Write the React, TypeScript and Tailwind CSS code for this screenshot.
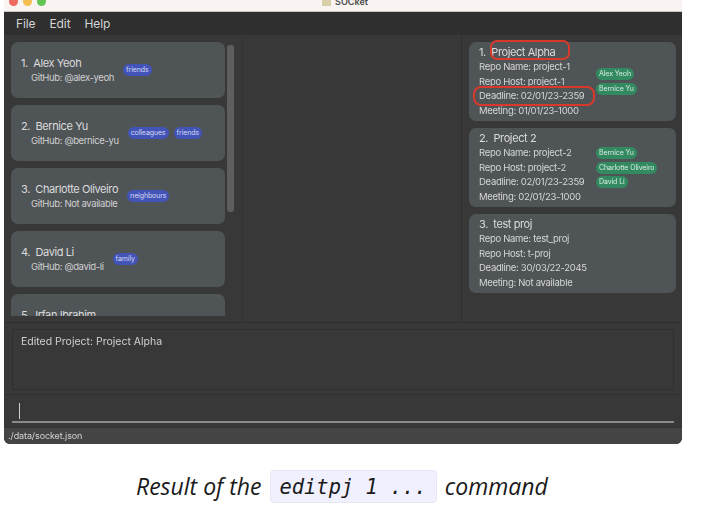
const sans = "font-['Inter','Liberation_Sans',sans-serif]";

const people = [
  { name: "Alex Yeoh", git: "@alex-yeoh", tags: ["friends"] },
  { name: "Bernice Yu", git: "@bernice-yu", tags: ["colleagues", "friends"] },
  { name: "Charlotte Oliveiro", git: "Not available", tags: ["neighbours"] },
  { name: "David Li", git: "@david-li", tags: ["family"] },
];

const projects = [
  { name: "Project Alpha", repo: "project-1", host: "project-1", deadline: "02/01/23-2359", meeting: "01/01/23-1000", members: ["Alex Yeoh", "Bernice Yu"] },
  { name: "Project 2", repo: "project-2", host: "project-2", deadline: "02/01/23-2359", meeting: "02/01/23-1000", members: ["Bernice Yu", "Charlotte Oliveiro", "David Li"] },
  { name: "test proj", repo: "test_proj", host: "t-proj", deadline: "30/03/22-2045", meeting: "Not available", members: [] },
];

function PersonCard({ index, name, git, tags }: { index: number; name: string; git: string; tags: string[] }) {
  return (
    <div className="flex h-[56px] shrink-0 items-center gap-[9px] rounded-[7px] bg-[#4f5457] pl-[10px]">
      <div className="shrink-0 whitespace-nowrap">
        <div className="text-[11px] leading-[15px] tracking-[-0.4px] text-[#dcdcdc]">
          {index}.&nbsp; {name}
        </div>
        <div className="pl-[10px] text-[9.5px] leading-[14px] tracking-[-0.38px] text-[#cfcfcf]">GitHub: {git}</div>
      </div>
      <div className="flex gap-[5px]">
        {tags.map((t) => (
          <span key={t} className="whitespace-nowrap rounded-[6px] bg-[#4254b8] px-[3px] py-[1px] text-[7px] leading-[10px] tracking-[-0.1px] text-[#d5d9f2]">
            {t}
          </span>
        ))}
      </div>
    </div>
  );
}

function PartialCard() {
  return (
    <div className="flex h-[56px] shrink-0 gap-[44px] rounded-[7px] bg-[#4f5457] pl-[10px] pt-[14px]">
      <div className="whitespace-nowrap text-[11px] leading-[15px] tracking-[-0.4px] text-[#dcdcdc]">5.&nbsp; Irfan Ibrahim</div>
      <span className="mt-[8px] h-[14px] w-[38px] rounded-[6px] bg-[#4254b8]" />
    </div>
  );
}

function ProjectCard({ index, p }: { index: number; p: (typeof projects)[number] }) {
  return (
    <div className="flex h-[79px] shrink-0 rounded-[7px] bg-[#4f5457] pl-[10px] pt-[3px]">
      <div className="w-[117px] shrink-0 whitespace-nowrap text-[9.5px] leading-[14.6px] tracking-[-0.3px] text-[#d6d6d6]">
        <div className="text-[11px] leading-[15px] tracking-[-0.4px] text-[#dcdcdc]">
          {index}.&nbsp; {p.name}
        </div>
        <div>Repo Name: {p.repo}</div>
        <div>Repo Host: {p.host}</div>
        <div>Deadline: {p.deadline}</div>
        <div>Meeting: {p.meeting}</div>
      </div>
      <div className="flex flex-col items-start justify-center gap-[2.6px] pb-[3px]">
        {p.members.map((m) => (
          <span key={m} className="whitespace-nowrap rounded-[6px] bg-[#338a61] px-[3px] py-[1px] text-[7px] leading-[10px] tracking-[-0.1px] text-[#d8eee3]">
            {m}
          </span>
        ))}
      </div>
    </div>
  );
}

export default function App() {
  return (
    <div className="h-[510px] w-[728px] overflow-hidden bg-white">
      <div className={`ml-[4px] flex h-[444px] w-[678px] flex-col overflow-hidden rounded-b-[6px] bg-[#383838] blur-[0.35px] ${sans}`}>
        <div className="relative flex h-[12px] shrink-0 items-center justify-center border-b border-[#c9c5c2] bg-[#f9f4f1]">
          <div className="absolute left-[5px] top-[-3px] flex gap-[5px]">
            <span className="h-[9px] w-[9px] rounded-full bg-[#ec6a5e]" />
            <span className="h-[9px] w-[9px] rounded-full bg-[#f4bf4f]" />
            <span className="h-[9px] w-[9px] rounded-full bg-[#61c554]" />
          </div>
          <div className="mt-[-7px] flex items-center gap-[4px] pl-[4px] text-[9px] font-semibold leading-[10px] text-[#4a4a4a]">
            <span className="h-[8px] w-[9px] bg-[#d9cfa8]" />
            SOCket
          </div>
        </div>

        <div className="flex h-[23px] shrink-0 items-center gap-[14px] border-b border-[#303030] bg-[#2f2f2f] pl-[12px] pt-[1px] text-[12px] tracking-[-0.1px] text-[#d4d4d4]">
          <span>File</span>
          <span>Edit</span>
          <span>Help</span>
        </div>

        <div className="flex h-[288px] shrink-0 border-b border-[#2e2e2e]">
          <div className="flex w-[239px] shrink-0 border-r border-[#333333] pl-[7px] pt-[7px]">
            <div className="flex h-[274px] w-[214px] shrink-0 flex-col gap-[7px] overflow-hidden">
              {people.map((p, i) => (
                <PersonCard key={p.name} index={i + 1} name={p.name} git={p.git} tags={p.tags} />
              ))}
              <PartialCard />
            </div>
            <div className="ml-[2px] mt-[3px] h-[167px] w-[7px] rounded-[3px] bg-[#5e5e5e]" />
          </div>
          <div className="flex-1" />
          <div className="relative flex w-[221px] shrink-0 flex-col gap-[7px] border-l border-[#2f2f2f] pl-[7px] pr-[6px] pt-[7px]">
            {projects.map((p, i) => (
              <ProjectCard key={p.name} index={i + 1} p={p} />
            ))}
            <span className="absolute left-[28px] top-[5px] h-[20px] w-[80px] rounded-[7px] border-2 border-[#d8392b]" />
            <span className="absolute left-[11px] top-[51px] h-[20px] w-[122px] rounded-[8px] border-2 border-[#d8392b]" />
          </div>
        </div>

        <div className="mx-[8px] mt-[6px] h-[61px] shrink-0 border border-[#2f2f2f] pl-[8px] pt-[4px] text-[10.5px] leading-[15px] text-[#d0d0d0]">
          Edited Project: Project Alpha
        </div>

        <div className="mt-[4px] flex h-[33px] shrink-0 flex-col border-t border-[#2f2f2f] px-[8px]">
          <div className="ml-[7px] mt-[8px] h-[16px] w-[1px] bg-[#cfcfcf]" />
          <div className="mb-[4px] mt-auto h-[2px] bg-[#8a8a8a]" />
        </div>

        <div className="flex flex-1 items-center border-t border-[#333333] bg-[#444444] pl-[4px] text-[9px] tracking-[-0.1px] text-[#d4d4d4]">
          ./data/socket.json
        </div>
      </div>

      <div className="mt-[26px] flex items-center pl-[136px] font-['Open_Sans','Noto_Sans',sans-serif] text-[23px] italic leading-[33px] text-[#1a1a1a]">
        <span>Result of the</span>
        <code className="ml-[8px] mr-[8px] h-[33px] rounded-[4px] border border-[#e6e6f5] bg-[#f0f0ff] px-[9px] font-['DejaVu_Sans_Mono',monospace] text-[20.4px] italic leading-[33px]">
          editpj 1 ...
        </code>
        <span>command</span>
      </div>
    </div>
  );
}
